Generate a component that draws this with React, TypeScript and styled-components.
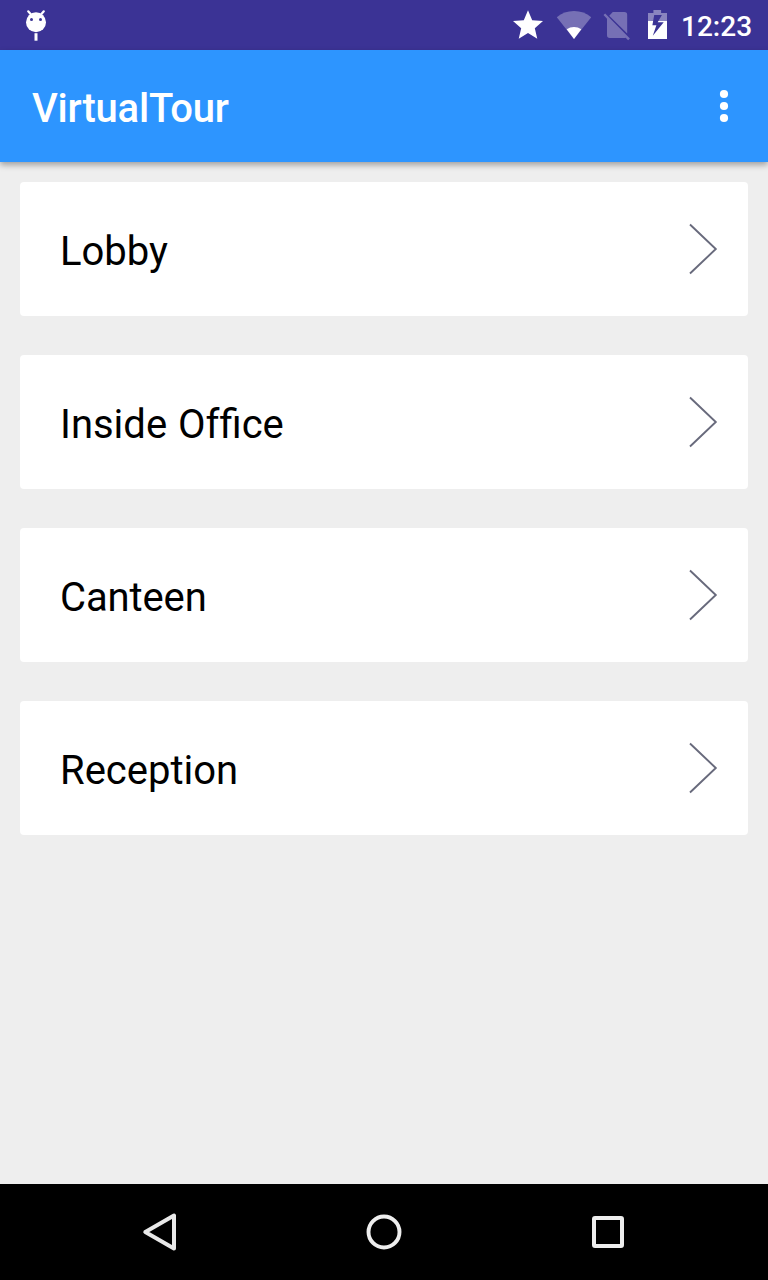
import React from "react";
import styled, { createGlobalStyle } from "styled-components";

const GlobalStyle = createGlobalStyle`
  * { box-sizing: border-box; }
  body { margin: 0; font-family: Roboto, "Liberation Sans", sans-serif; }
`;

const Screen = styled.div`
  display: flex;
  flex-direction: column;
  height: 100vh;
  background: #eeeeee;
`;

const StatusBar = styled.header`
  display: flex;
  justify-content: space-between;
  height: 50px;
  padding: 0 17px 0 24px;
  background: #3b3395;
`;

const StatusIcons = styled.div`
  display: flex;
`;

const Clock = styled.time`
  margin-left: 7px;
  width: 70px;
  color: #ffffff;
  font-size: 28px;
  font-weight: 500;
  line-height: 53px;
  white-space: nowrap;
`;

const AppBar = styled.div`
  display: flex;
  justify-content: space-between;
  height: 112px;
  padding-left: 32px;
  background: #2d95ff;
  box-shadow: 0 3px 6px rgba(0, 0, 0, 0.33);
`;

const Title = styled.h1`
  margin: 0;
  color: #ffffff;
  font-size: 40px;
  font-weight: 500;
  letter-spacing: -0.22px;
  line-height: 118px;
`;

const MenuButton = styled.button`
  width: 88px;
  padding: 0;
  border: 0;
  background: none;
  svg { display: block; }
`;

const PlaceList = styled.main`
  display: flex;
  flex: 1;
  flex-direction: column;
  gap: 39px;
  padding: 20px;
`;

const PlaceCard = styled.div`
  display: flex;
  justify-content: space-between;
  align-items: center;
  height: 134px;
  padding: 0 30px 0 40px;
  border-radius: 4px;
  background: #ffffff;
`;

const PlaceName = styled.span<{ $wordSpacing?: number; $tracking?: number }>`
  padding-top: 5px;
  color: #000000;
  font-size: 40px;
  line-height: 47px;
  word-spacing: ${({ $wordSpacing = 0 }) => $wordSpacing}px;
  ${({ $tracking }) => $tracking && `letter-spacing: ${$tracking}px;`}
`;

/* Keeps the first f apart from the fi ligature that follows it. */
const Unligated = styled.span`
  font-variant-ligatures: none;
`;

const NavBar = styled.nav`
  display: flex;
  justify-content: center;
  height: 96px;
  background: #000000;
`;

const NavButton = styled.button`
  width: 224px;
  padding: 0;
  border: 0;
  background: none;
  svg { display: block; margin: 0 auto; }
`;

const DebugIcon = () => (
  <svg width="24" height="50" viewBox="24 0 24 50">
    <g stroke="#fff" strokeWidth="2.2" strokeLinecap="round">
      <path d="M31 14.5L28.2 11.3M41 14.5L43.8 11.3" />
    </g>
    <circle cx="36" cy="22.2" r="10" fill="#fff" />
    <circle cx="31.5" cy="19.5" r="1.5" fill="#3b3395" />
    <circle cx="40.5" cy="19.5" r="1.5" fill="#3b3395" />
    <path d="M34.5 33.2h3v7.5h-3z" fill="#fff" />
  </svg>
);

const StarIcon = () => (
  <svg width="44" height="50" viewBox="506 0 44 50">
    <path
      transform="translate(510 7.2) scale(1.5)"
      d="M12 17.27L18.18 21l-1.64-7.03L22 9.24l-7.19-.61L12 2 9.19 8.63 2 9.24l5.46 4.73L5.82 21z"
      fill="#fff"
    />
  </svg>
);

const WifiIcon = () => (
  <svg width="50" height="50" viewBox="550 0 50 50">
    <path d="M574 39L556.8 17.2Q564 11 574 11T591.2 17.2Z" fill="#fff" fillOpacity=".3" />
    <path d="M574 39L566.7 29.3Q570 27 574 27T581.3 29.3Z" fill="#fff" />
  </svg>
);

const NoSimIcon = () => (
  <svg width="38" height="50" viewBox="600 0 38 50">
    <g fill="#fff" fillOpacity=".3">
      <path d="M609.2 15.7L612.8 12H624.4Q627.2 12 627.2 14.8V33.5Z" />
      <path d="M605.2 13.4L603.5 15.1L607 18.7V35.3Q607 38 609.8 38H624.3Q625 38 625.7 37.7L628.1 40.2L629.9 38.5Z" />
    </g>
  </svg>
);

const BatteryIcon = () => (
  <svg width="36" height="50" viewBox="638 0 36 50">
    <path d="M653.4 10h7.7v3h5.9v8h-19v-8h5.4z" fill="#fff" fillOpacity=".4" />
    <path d="M648 21h19v18h-19z" fill="#fff" />
    <path d="M654.2 15H661.9L657.7 22.3H663.7L652.8 35.8L656.4 25.2H652.4Z" fill="#3b3395" />
  </svg>
);

const OverflowIcon = () => (
  <svg width="88" height="112" viewBox="680 50 88 112">
    <g fill="#fff">
      <circle cx="724" cy="94" r="4.1" />
      <circle cx="724" cy="106" r="4.1" />
      <circle cx="724" cy="118" r="4.1" />
    </g>
  </svg>
);

const Chevron = () => (
  <svg width="30" height="52" viewBox="0 0 30 52" fill="none" stroke="#686a7c" strokeWidth="1.9">
    <path d="M2 1.5L27.8 26L2 50.5" />
  </svg>
);

const BackIcon = () => (
  <svg width="64" height="96" viewBox="0 0 64 96" fill="none" stroke="#e9e9e9" strokeWidth="4" strokeLinejoin="round">
    <path d="M46 31.5V64.5L17.3 48Z" />
  </svg>
);

const HomeIcon = () => (
  <svg width="96" height="96" viewBox="0 0 96 96" fill="none" stroke="#eee" strokeWidth="3.9">
    <circle cx="48" cy="48" r="15.5" />
  </svg>
);

const RecentsIcon = () => (
  <svg width="96" height="96" viewBox="0 0 96 96" fill="none" stroke="#eee" strokeWidth="4">
    <rect x="34" y="34" width="28" height="28" rx="1" />
  </svg>
);

const places = [
  { id: "lobby", name: "Lobby" },
  { id: "office", name: <>Inside <Unligated>Of</Unligated>fice</>, wordSpacing: 1 },
  { id: "canteen", name: "Canteen", tracking: -0.12 },
  { id: "reception", name: "Reception" },
];

export default function App() {
  return (
    <Screen>
      <GlobalStyle />
      <StatusBar>
        <DebugIcon />
        <StatusIcons>
          <StarIcon />
          <WifiIcon />
          <NoSimIcon />
          <BatteryIcon />
          <Clock>12:23</Clock>
        </StatusIcons>
      </StatusBar>
      <AppBar>
        <Title>VirtualTour</Title>
        <MenuButton aria-label="More options">
          <OverflowIcon />
        </MenuButton>
      </AppBar>
      <PlaceList>
        {places.map(({ id, name, wordSpacing, tracking }) => (
          <PlaceCard key={id}>
            <PlaceName $wordSpacing={wordSpacing} $tracking={tracking}>{name}</PlaceName>
            <Chevron />
          </PlaceCard>
        ))}
      </PlaceList>
      <NavBar>
        <NavButton aria-label="Back"><BackIcon /></NavButton>
        <NavButton aria-label="Home"><HomeIcon /></NavButton>
        <NavButton aria-label="Recents"><RecentsIcon /></NavButton>
      </NavBar>
    </Screen>
  );
}
